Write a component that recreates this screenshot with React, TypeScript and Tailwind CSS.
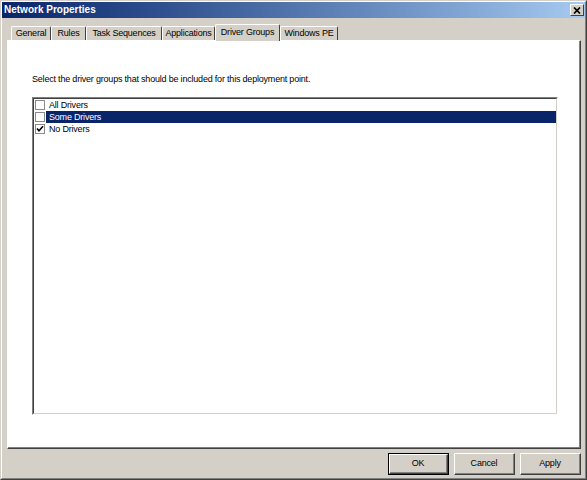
import React from 'react';

interface TabDef {
  label: string;
  width: string;
  selected?: boolean;
}

const tabs: TabDef[] = [
  { label: 'General', width: 'w-[40px]' },
  { label: 'Rules', width: 'w-[35px]' },
  { label: 'Task Sequences', width: 'w-[76px]' },
  { label: 'Applications', width: 'w-[53px]' },
  { label: 'Driver Groups', width: 'w-[65px]', selected: true },
  { label: 'Windows PE', width: 'w-[58px]' },
];

const groups = [
  { name: 'All Drivers', checked: false, selected: false },
  { name: 'Some Drivers', checked: false, selected: true },
  { name: 'No Drivers', checked: true, selected: false },
];

const CheckBox: React.FC<{ checked: boolean }> = ({ checked }) => (
  <div className="w-[10px] h-[10px] border border-[#8a8a8a] bg-white flex items-center justify-center shrink-0">
    {checked && (
      <svg width="8" height="8" viewBox="0 0 8 8">
        <path d="M1 3.5 L3 5.8 L7 1.2" stroke="#000" strokeWidth="1.6" fill="none" />
      </svg>
    )}
  </div>
);

const Button: React.FC<{ label: string; isDefault?: boolean }> = ({ label, isDefault }) => (
  <div className={`w-[61px] h-[22px] ${isDefault ? 'border border-black' : ''}`}>
    <div className="w-full h-full border border-t-white border-l-white border-r-[#404040] border-b-[#404040]">
      <div className="w-full h-full border-r border-b border-[#808080] bg-[#d4d0c8] flex items-center justify-center text-[9px] text-black">
        {label}
      </div>
    </div>
  </div>
);

export default function App() {
  return (
    <div className="w-[587px] h-[480px] bg-[#d4d0c8] font-['Liberation_Sans',Arial,sans-serif] tracking-[-0.2px] border border-t-[#d4d0c8] border-l-[#d4d0c8] border-r-[#404040] border-b-[#404040]">
      <div className="w-full h-full flex flex-col border border-t-white border-l-white border-r-[#808080] border-b-[#808080]">
        {/* title bar */}
        <div className="h-[16px] flex items-center justify-between pl-[2px] pr-[1px] bg-gradient-to-r from-[#0a246a] to-[#a6caf0]">
          <span className="text-[10px] font-bold text-white leading-none tracking-normal">Network Properties</span>
          <div className="w-[14px] h-[12px] bg-[#d4d0c8] border border-t-white border-l-white border-r-[#404040] border-b-[#404040] flex items-center justify-center">
            <svg width="8" height="7" viewBox="0 0 8 7">
              <path d="M1 0.5 L7 6.5 M7 0.5 L1 6.5" stroke="#000" strokeWidth="1.7" />
            </svg>
          </div>
        </div>

        {/* tab strip */}
        <div className="mt-[6px] h-[16px] flex items-end pl-[7px] pr-[4px]">
          <div className="flex items-end pl-[2px]">
            {tabs.map((tab) => (
              <div
                key={tab.label}
                className={`${tab.width} ${
                  tab.selected ? 'h-[17px] -mb-[1px] relative z-10 pb-[2px]' : 'h-[14px]'
                } bg-[#d4d0c8] rounded-t-[2px] border-l border-t border-white border-r border-r-[#404040] flex items-center justify-center text-[9px] text-black leading-none whitespace-nowrap`}
              >
                <span>{tab.label}</span>
              </div>
            ))}
          </div>
        </div>

        {/* panel */}
        <div className="ml-[5px] mr-[4px] h-[409px] border border-t-white border-l-white border-r-[#404040] border-b-[#404040]">
          <div className="w-full h-full bg-white border-r border-b border-[#808080] pl-[24px] pr-[21px] pt-[32px]">
            <p className="text-[9px] leading-[13px] text-black">
              Select the driver groups that should be included for this deployment point.
            </p>
            <div className="mt-[11px] h-[318px] border border-t-[#808080] border-l-[#808080] border-r-white border-b-white">
              <div className="w-full h-full border border-t-[#404040] border-l-[#404040] border-r-[#d4d0c8] border-b-[#d4d0c8] bg-white">
                {groups.map((g) => (
                  <div key={g.name} className="h-[12px] flex items-center pl-[1px]">
                    <CheckBox checked={g.checked} />
                    <div
                      className={`ml-[1px] flex-1 h-full flex items-center pl-[3px] text-[9px] leading-none ${
                        g.selected ? 'bg-[#0a246a] text-white' : 'text-black'
                      }`}
                    >
                      {g.name}
                    </div>
                  </div>
                ))}
              </div>
            </div>
          </div>
        </div>

        {/* buttons */}
        <div className="mt-[4px] flex justify-end gap-[5px] pr-[4px]">
          <Button label="OK" isDefault />
          <Button label="Cancel" />
          <Button label="Apply" />
        </div>
      </div>
    </div>
  );
}
